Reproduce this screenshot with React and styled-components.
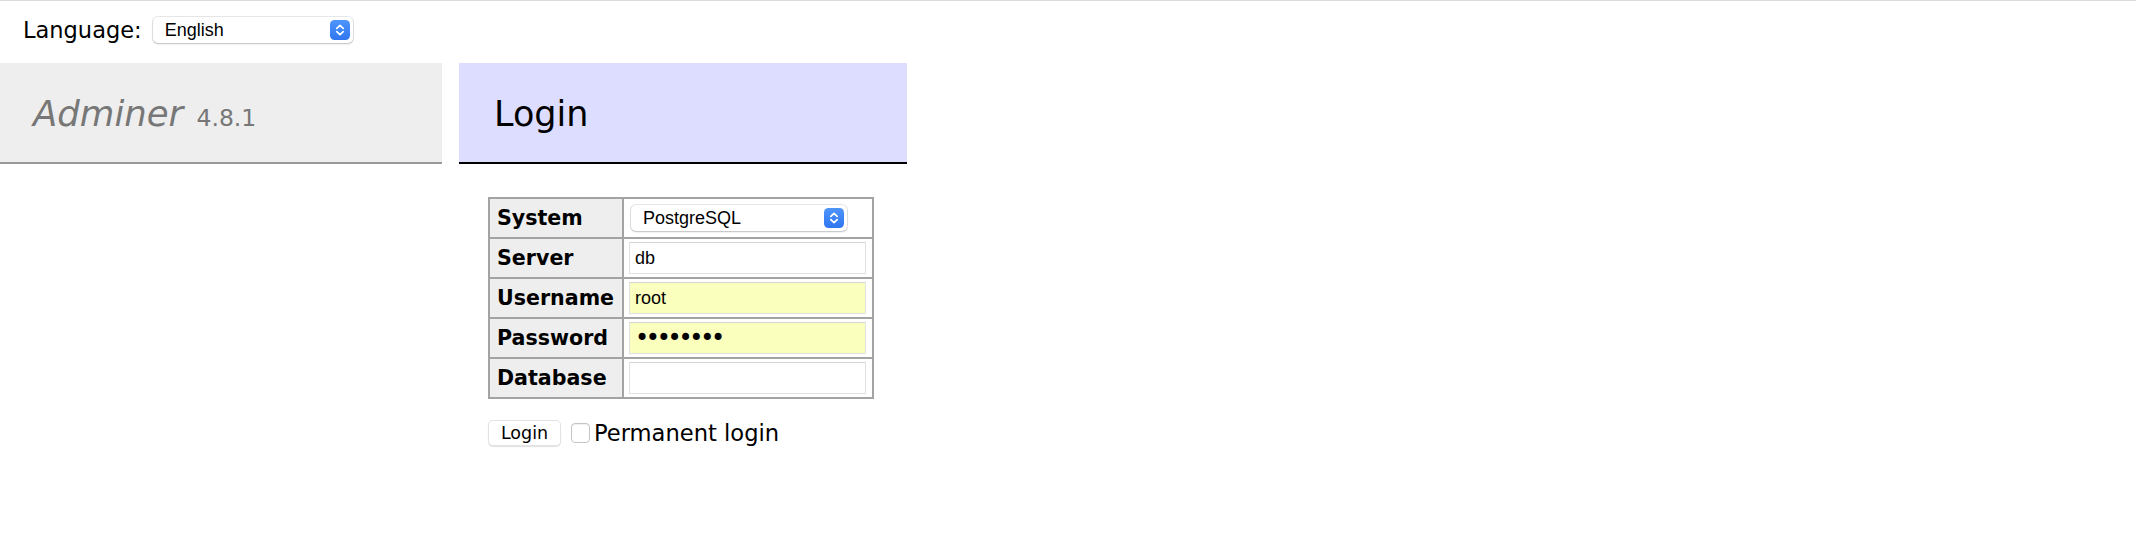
import styled, { createGlobalStyle } from 'styled-components';

const GlobalStyle = createGlobalStyle`
  body {
    margin: 0;
    background: #fff;
    color: #000;
    font-family: "DejaVu Sans", Verdana, sans-serif;
    -webkit-font-smoothing: antialiased;
  }
`;

const Page = styled.div`
  border-top: 1px solid #dcdcdc;
  min-height: 545px;
`;

const LangBar = styled.div`
  display: flex;
  align-items: center;
  gap: 11px;
  height: 28px;
  padding: 15px 0 19px 23px;
  font-size: 22.5px;
`;

const SelectWrap = styled.div`
  position: relative;
  width: ${(p) => p.$width}px;
  height: 26px;
  margin-left: ${(p) => p.$offset || 0}px;
`;

const Select = styled.select`
  appearance: none;
  -webkit-appearance: none;
  display: block;
  width: 100%;
  height: 100%;
  margin: 0;
  padding: 0 0 0 12px;
  border: none;
  border-radius: 5px;
  background: #fff;
  box-shadow: 0 0 0 1px rgba(0, 0, 0, 0.09), 0 1px 2px rgba(0, 0, 0, 0.18);
  font-family: "Liberation Sans", Arial, sans-serif;
  font-size: 18px;
  color: #000;
  outline: none;
`;

const Stepper = styled.svg`
  position: absolute;
  top: 3px;
  right: 3px;
  pointer-events: none;
`;

const Main = styled.div`
  display: flex;
  align-items: flex-start;
`;

const Menu = styled.div`
  width: 442px;
`;

const Title = styled.h1`
  margin: 0;
  height: 40px;
  padding: 31px 0 28px 33px;
  background: #eee;
  border-bottom: 2px solid #999;
  font-size: 35.5px;
  line-height: 40px;
  font-weight: normal;
  font-style: italic;
  color: #777;
  white-space: nowrap;
`;

const Version = styled.span`
  font-style: normal;
  font-size: 23.5px;
  line-height: 1;
  margin-left: 2px;
  color: #777;
`;

const Content = styled.div`
  margin-left: 17px;
  width: 448px;
`;

const Heading = styled.h2`
  margin: 0;
  height: 40px;
  padding: 31px 0 28px 35px;
  background: #ddf;
  border-bottom: 2px solid #000;
  font-size: 35px;
  line-height: 40px;
  font-weight: normal;
  color: #000;
`;

const Form = styled.form`
  margin: 33px 0 0 29px;
`;

const Table = styled.table`
  border-collapse: separate;
  border-spacing: 0;
  border-top: 2px solid #a3a3a3;
  border-left: 2px solid #a3a3a3;
`;

const Label = styled.th`
  width: 118px;
  height: 38px;
  padding: 0 7px;
  background: #eee;
  border-right: 2px solid #a3a3a3;
  border-bottom: 2px solid #a3a3a3;
  text-align: left;
  vertical-align: middle;
  font-size: 20.6px;
  font-weight: bold;
`;

const Cell = styled.td`
  width: 237px;
  height: 38px;
  padding: 0 6px 0 5px;
  border-right: 2px solid #a3a3a3;
  border-bottom: 2px solid #a3a3a3;
  vertical-align: middle;
`;

const TextInput = styled.input`
  display: block;
  box-sizing: border-box;
  width: 237px;
  height: 32px;
  margin: 0;
  padding: 0 0 0 5px;
  border: 1px solid #e2e2e2;
  border-top-color: #d4d4d4;
  background: ${(p) => (p.$filled ? '#faffbd' : '#fff')};
  font-family: "Liberation Sans", Arial, sans-serif;
  font-size: 18px;
  color: #000;
  outline: none;
`;

const PasswordInput = styled(TextInput)`
  font-family: "DejaVu Sans", sans-serif;
  font-size: 24px;
  letter-spacing: -3.3px;
`;

const Actions = styled.div`
  display: flex;
  align-items: center;
  gap: 10px;
  margin-top: 21px;
`;

const Button = styled.button`
  width: 73px;
  height: 26px;
  padding: 0;
  border: 1px solid rgba(0, 0, 0, 0.11);
  border-radius: 5px;
  background: #fff;
  box-shadow: 0 1px 1px rgba(0, 0, 0, 0.12);
  font-family: "DejaVu Sans", sans-serif;
  font-size: 17.5px;
  color: #000;
`;

const CheckLabel = styled.label`
  display: inline-flex;
  align-items: center;
  gap: 4px;
  font-size: 22.6px;
`;

const Checkbox = styled.input`
  appearance: none;
  -webkit-appearance: none;
  box-sizing: border-box;
  width: 19px;
  height: 20px;
  margin: 0;
  border: 1px solid #c4c4c4;
  border-radius: 4px;
  background: #fff;
  box-shadow: inset 0 1px 1px rgba(0, 0, 0, 0.06);
`;

const StepIcon = () => (
  <Stepper width="20" height="20" viewBox="0 0 20 20">
    <defs>
      <linearGradient id="stepBlue" x1="0" y1="0" x2="0" y2="1">
        <stop offset="0" stopColor="#4e95fb" />
        <stop offset="1" stopColor="#2f76f0" />
      </linearGradient>
    </defs>
    <rect x="0" y="0" width="20" height="20" rx="4.5" fill="url(#stepBlue)" />
    <path d="M6.8 8.4 L10 5.4 L13.2 8.4" fill="none" stroke="#fff" strokeWidth="1.7" strokeLinecap="round" strokeLinejoin="round" />
    <path d="M6.8 11.6 L10 14.6 L13.2 11.6" fill="none" stroke="#fff" strokeWidth="1.7" strokeLinecap="round" strokeLinejoin="round" />
  </Stepper>
);

const App = () => {
  return (
    <Page>
      <GlobalStyle />
      <LangBar>
        <span>Language:</span>
        <SelectWrap $width={200}>
          <Select defaultValue="en">
            <option value="en">English</option>
          </Select>
          <StepIcon />
        </SelectWrap>
      </LangBar>
      <Main>
        <Menu>
          <Title>
            Adminer <Version>4.8.1</Version>
          </Title>
        </Menu>
        <Content>
          <Heading>Login</Heading>
          <Form onSubmit={(e) => e.preventDefault()}>
            <Table>
              <tbody>
                <tr>
                  <Label>System</Label>
                  <Cell>
                    <SelectWrap $width={216} $offset={2}>
                      <Select defaultValue="pgsql">
                        <option value="pgsql">PostgreSQL</option>
                      </Select>
                      <StepIcon />
                    </SelectWrap>
                  </Cell>
                </tr>
                <tr>
                  <Label>Server</Label>
                  <Cell>
                    <TextInput defaultValue="db" />
                  </Cell>
                </tr>
                <tr>
                  <Label>Username</Label>
                  <Cell>
                    <TextInput $filled defaultValue="root" />
                  </Cell>
                </tr>
                <tr>
                  <Label>Password</Label>
                  <Cell>
                    <PasswordInput $filled type="password" defaultValue="password" />
                  </Cell>
                </tr>
                <tr>
                  <Label>Database</Label>
                  <Cell>
                    <TextInput />
                  </Cell>
                </tr>
              </tbody>
            </Table>
            <Actions>
              <Button type="submit">Login</Button>
              <CheckLabel>
                <Checkbox type="checkbox" />
                Permanent login
              </CheckLabel>
            </Actions>
          </Form>
        </Content>
      </Main>
    </Page>
  );
};

export default App;
